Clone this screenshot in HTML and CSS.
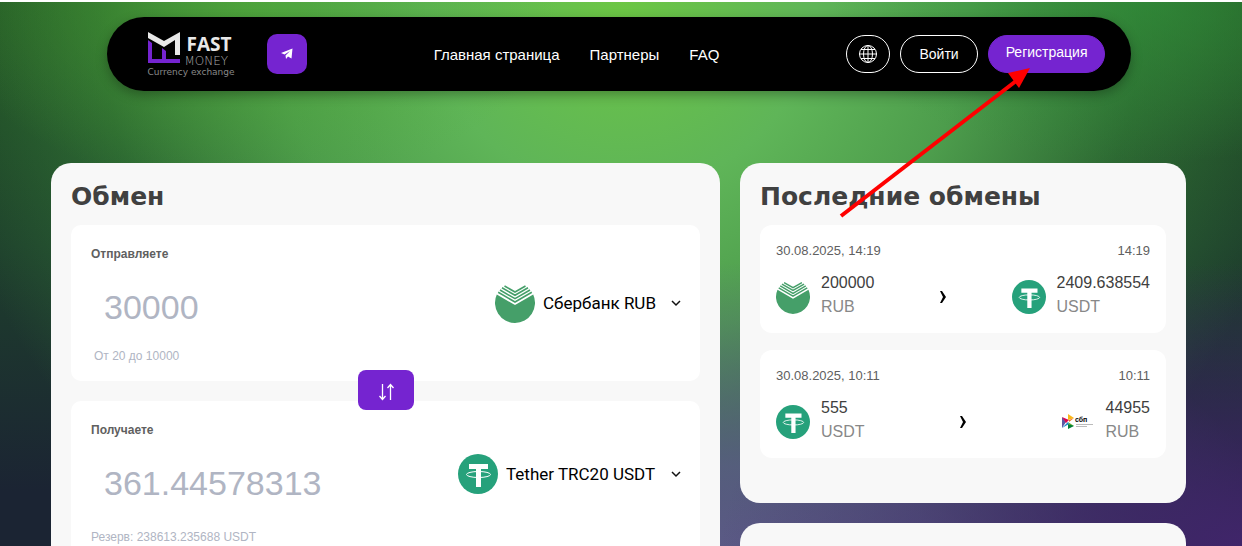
FILE: index.html
```html
<!DOCTYPE html>
<html lang="ru">
<head>
    <meta charset="UTF-8">
    <meta name="viewport" content="width=device-width, initial-scale=1.0">
    <title>Fast Money - Обмен</title>
    <link rel="stylesheet" href="styles.css">
</head>
<body>
    <!-- Shared icons -->
    <svg class="sprite" aria-hidden="true">
        <symbol id="icon-sber" viewBox="0 0 40 40">
            <path d="M1.8 11.6L20 22L38.2 11.6A20 20 0 1 1 1.8 11.6Z" fill="#459f69"/>
            <path d="M9.500 3L20 9L30.500 3M7 4.800L20 12.300L33 4.800M5 7L20 15.700L35 7M3.200 9.300L20 19L36.800 9.300" fill="none" stroke="#459f69" stroke-width="1.600"/>
        </symbol>
        <symbol id="icon-tether" viewBox="0 0 40 40">
            <circle cx="20" cy="20" r="20" fill="#26a17b"/>
            <path d="M11 10H30V15H23V33H18V15H11Z" fill="#fff"/>
            <ellipse cx="20.500" cy="20.500" rx="12" ry="3" fill="none" stroke="#fff"/>
        </symbol>
        <symbol id="icon-chevron" viewBox="0 0 16 16">
            <path d="M4 6L8 10L12 6" fill="none" stroke="#111" stroke-width="1.500"/>
        </symbol>
        <symbol id="icon-next" viewBox="0 0 8 12">
            <path d="M1 0H3L7 6L3 12H1L4 6Z" fill="#000"/>
        </symbol>
        <symbol id="icon-sbp" viewBox="0 0 34 32">
            <path d="M1 11L5 16L1 22Z" fill="#5b57a2"/>
            <path d="M1 11L8 14L5 17Z" fill="#d90751"/>
            <path d="M7 8L7 14L13 12Z" fill="#fab718"/>
            <path d="M8 14L13 12L8 16Z" fill="#ed6f26"/>
            <path d="M7 16L13 20L9 20Z" fill="#63b22f"/>
            <path d="M1 22L7 16L8 18Z" fill="#1487c9"/>
            <path d="M7 18L13 20L7 23Z" fill="#017f36"/>
            <text x="14" y="16" class="sbp-name">сбп</text>
            <path d="M15 18.500H32M15 20.500H26" stroke="#bbb"/>
        </symbol>
    </svg>

    <header class="header">
        <div class="brand">
            <a href="#" class="logo">
                <svg class="logo-mark" viewBox="0 0 32 31" aria-hidden="true">
                    <path d="M0 0L16 9L32 0V23H27V8L16 15L0 6Z" fill="#e8e8e8"/>
                    <path d="M0 8L4 11V27H14V16L18 19V27H32V31H0Z" fill="#7524d0"/>
                </svg>
                <span class="logo-words">
                    <b>FAST</b>
                    <span>MONEY</span>
                </span>
                <small>Currency exchange</small>
            </a>
            <a href="#" class="telegram" aria-label="Telegram">
                <svg width="12" height="12" viewBox="0 0 12 12"><path d="M0 5L11.500 0.500L10.500 10.500L7 8.500L5 11L4.500 7.500L9 3L3.500 6.500Z" fill="#fff"/></svg>
            </a>
        </div>
        <nav class="nav">
            <a href="#">Главная страница</a>
            <a href="#">Партнеры</a>
            <a href="#">FAQ</a>
        </nav>
        <div class="actions">
            <button type="button" class="btn btn-lang" aria-label="Язык">
                <svg width="18" height="18" viewBox="0 0 18 18" fill="none" stroke="#fff">
                    <circle cx="9" cy="9" r="8.500"/>
                    <ellipse cx="9" cy="9" rx="4.500" ry="8.500"/>
                    <path d="M9 0V18M0 9H18M2 4.500H16M2 13.500H16"/>
                </svg>
            </button>
            <a href="#" class="btn">Войти</a>
            <a href="#" class="btn btn-primary">Регистрация</a>
        </div>
    </header>

    <main class="container">
        <section class="panel">
            <h2>Обмен</h2>
            <form class="exchange">
                <div class="field">
                    <div class="amount">
                        <label for="send">Отправляете</label>
                        <input type="text" id="send" placeholder="30000">
                        <p class="hint hint-limit">От 20 до 10000</p>
                    </div>
                    <div class="currency">
                        <svg class="coin"><use href="#icon-sber"/></svg>
                        <select aria-label="Валюта отправки">
                            <option>Сбербанк RUB</option>
                        </select>
                        <svg class="chevron"><use href="#icon-chevron"/></svg>
                    </div>
                </div>
                <button type="button" class="swap" aria-label="Поменять местами">
                    <svg width="18" height="18" viewBox="0 0 18 18" fill="none" stroke="#fff">
                        <path d="M5.500 1V16M2.500 13L5.500 16.500L8.500 13M13.500 17V2M10.500 5L13.500 1.500L16.500 5" stroke-width="1.300"/>
                    </svg>
                </button>
                <div class="field field-get">
                    <div class="amount">
                        <label for="get">Получаете</label>
                        <input type="text" id="get" placeholder="361.44578313">
                        <p class="hint">Резерв: 238613.235688 USDT</p>
                    </div>
                    <div class="currency">
                        <svg class="coin"><use href="#icon-tether"/></svg>
                        <select aria-label="Валюта получения">
                            <option>Tether TRC20 USDT</option>
                        </select>
                        <svg class="chevron"><use href="#icon-chevron"/></svg>
                    </div>
                </div>
            </form>
        </section>

        <aside class="sidebar">
            <section class="panel history">
                <h2>Последние обмены</h2>
                <article class="deal">
                    <div class="deal-time"><span>30.08.2025, 14:19</span><span>14:19</span></div>
                    <div class="deal-row">
                        <div class="side">
                            <svg class="side-icon"><use href="#icon-sber"/></svg>
                            <p>200000<span>RUB</span></p>
                        </div>
                        <svg class="next"><use href="#icon-next"/></svg>
                        <div class="side">
                            <svg class="side-icon"><use href="#icon-tether"/></svg>
                            <p>2409.638554<span>USDT</span></p>
                        </div>
                    </div>
                </article>
                <article class="deal">
                    <div class="deal-time"><span>30.08.2025, 10:11</span><span>10:11</span></div>
                    <div class="deal-row">
                        <div class="side">
                            <svg class="side-icon"><use href="#icon-tether"/></svg>
                            <p>555<span>USDT</span></p>
                        </div>
                        <svg class="next"><use href="#icon-next"/></svg>
                        <div class="side">
                            <svg class="side-icon"><use href="#icon-sbp"/></svg>
                            <p>44955<span>RUB</span></p>
                        </div>
                    </div>
                </article>
            </section>
            <section class="panel panel-next"></section>
        </aside>
    </main>

    <!-- Pointer to the registration button -->
    <svg class="pointer" width="200" height="160" viewBox="0 0 200 160" aria-hidden="true">
        <path d="M5 152L180 17" stroke="#f00" stroke-width="4"/>
        <path d="M194 4L172 9L183 24Z" fill="#f00"/>
    </svg>
</body>
</html>
```

FILE: styles.css
```css
* {
    box-sizing: border-box;
}

html {
    height: 100%;
}

body {
    margin: 0;
    padding: 15px 5px 0 0;
    height: 100%;
    overflow: hidden;
    border-top: 2px solid #fff;
    font-family: "Liberation Sans", Arial, sans-serif;
    color: #404040;
    background:
        radial-gradient(ellipse 42% 52% at 100% 100%, #40256a 0%, rgba(64, 37, 106, 0) 100%),
        radial-gradient(ellipse 45% 62% at 60% 110%, #605a8c 0%, rgba(94, 92, 140, 0.8) 40%, rgba(94, 92, 140, 0) 100%),
        radial-gradient(ellipse 25% 30% at 92% 0%, rgba(50, 150, 60, 0.6) 0%, rgba(50, 150, 60, 0) 100%),
        radial-gradient(ellipse 25% 35% at 20% 0%, rgba(80, 170, 50, 0.6) 0%, rgba(80, 170, 50, 0) 100%),
        radial-gradient(ellipse 56% 125% at 50% 0%, #6cc644 0%, #5fb558 28%, rgba(82, 166, 80, 0.9) 50%, rgba(58, 140, 60, 0.5) 75%, rgba(40, 90, 50, 0) 100%),
        linear-gradient(#205022, #1e3f2c 45%, #1b2433 90%);
    background-repeat: no-repeat;
}

.sprite {
    display: none;
}

h2,
p {
    margin: 0;
}

a {
    color: inherit;
    text-decoration: none;
}

/* Header */
.header {
    display: flex;
    align-items: center;
    justify-content: space-between;
    max-width: 1024px;
    height: 74px;
    margin: 0 auto;
    padding: 0 25px 0 41px;
    border-radius: 37px;
    background: #000;
    color: #fff;
    font-size: 15px;
    box-shadow: 0 4px 12px rgba(0, 0, 0, 0.3);
}

.brand {
    display: flex;
    align-items: center;
    gap: 27px;
}

.logo {
    display: grid;
    grid-template-columns: 32px auto;
    column-gap: 5px;
    width: 92px;
    padding-top: 1px;
}

.logo-mark {
    width: 32px;
    height: 31px;
}

.logo-words {
    display: flex;
    flex-direction: column;
    padding-top: 1px;
    color: #e8e8e8;
}

.logo-words b {
    padding-left: 2px;
    font-family: "Open Sans", sans-serif;
    font-size: 19px;
    line-height: 22px;
}

.logo-words span {
    font-family: "DejaVu Sans Light", "DejaVu Sans", sans-serif;
    font-weight: 200;
    font-size: 12px;
    line-height: 12px;
    color: #aaa;
}

.logo small {
    grid-column: 1 / 3;
    font-family: "DejaVu Sans", sans-serif;
    font-size: 9px;
    line-height: 11px;
    white-space: nowrap;
    color: #888;
}

.telegram {
    display: flex;
    align-items: center;
    justify-content: center;
    width: 40px;
    height: 40px;
    border-radius: 10px;
    background: #7524d0;
}

.nav {
    display: flex;
    gap: 30px;
}

.actions {
    display: flex;
    gap: 10px;
    font-size: 14px;
}

.btn {
    display: flex;
    align-items: center;
    height: 38px;
    padding: 0 18px;
    border: 1px solid #fff;
    border-radius: 19px;
    background: none;
}

.btn-lang {
    padding: 0 12px;
}

.btn-primary {
    padding: 0 17px 4px;
    border-color: #7524d0;
    background: #7524d0;
}

/* Panels */
.container {
    display: grid;
    grid-template-columns: 3fr 2fr;
    gap: 20px;
    max-width: 1135px;
    margin: 72px auto 0;
}

.panel {
    padding: 20px;
    border-radius: 20px;
    background: #f8f8f8;
}

.panel h2 {
    margin-bottom: 14px;
    font-family: "DejaVu Sans", sans-serif;
    font-size: 25px;
    line-height: 28px;
}

.sidebar {
    display: flex;
    flex-direction: column;
    gap: 20px;
}

.panel-next {
    height: 120px;
}

/* Exchange form */
.exchange {
    position: relative;
    display: flex;
    flex-direction: column;
    gap: 20px;
}

.field {
    display: flex;
    justify-content: space-between;
    align-items: flex-start;
    height: 156px;
    padding: 21px 16px 0 20px;
    border-radius: 10px;
    background: #fff;
}

.amount {
    display: flex;
    flex-direction: column;
}

.amount label {
    font-size: 12px;
    font-weight: bold;
    line-height: 16px;
    color: #606060;
}

.amount input {
    width: 300px;
    height: 54px;
    margin: 18px 0 14px;
    padding: 0 13px;
    border: none;
    background: none;
    font-family: inherit;
    font-size: 34px;
}

.amount input::placeholder {
    color: #b0b5c3;
}

.hint {
    font-size: 12px;
    line-height: 16px;
    color: #b0b5c3;
}

.hint-limit {
    padding-left: 3px;
}

.currency {
    display: flex;
    align-items: center;
    margin-top: 37px;
}

.field-get {
    height: 166px;
}

.field-get .currency {
    margin-top: 32px;
}

.field-get .hint {
    margin-top: 5px;
}

.coin {
    width: 40px;
    height: 40px;
}

.currency select {
    appearance: none;
    margin: 0 12px 0 8px;
    padding: 0;
    border: none;
    background: none;
    font-family: Roboto, sans-serif;
    font-size: 17px;
    color: #000;
}

.chevron {
    width: 16px;
    height: 16px;
}

.swap {
    position: absolute;
    top: 145px;
    left: 50%;
    display: flex;
    align-items: center;
    justify-content: center;
    width: 56px;
    height: 40px;
    padding: 4px 0 0;
    border: none;
    border-radius: 8px;
    background: #7524d0;
    transform: translateX(-50%);
}

/* Recent deals */
.history {
    padding-bottom: 45px;
}

.deal {
    padding: 17px 16px 14px;
    border-radius: 12px;
    background: #fff;
}

.deal + .deal {
    margin-top: 17px;
}

.deal-time {
    display: flex;
    justify-content: space-between;
    margin-bottom: 11px;
    font-size: 13px;
    line-height: 18px;
    color: #606060;
}

.deal-row,
.side {
    display: flex;
    align-items: center;
    justify-content: space-between;
}

.side {
    gap: 11px;
    font-size: 16px;
    line-height: 24px;
}

.side span {
    display: block;
    color: #888;
}

.side-icon {
    width: 34px;
    height: 34px;
    margin-top: 4px;
}

.sbp-name {
    font: bold 7px "Liberation Sans", Arial, sans-serif;
}

.next {
    width: 8px;
    height: 12px;
    margin-top: 4px;
}

.pointer {
    position: absolute;
    top: 64px;
    left: 836px;
    pointer-events: none;
}
```
